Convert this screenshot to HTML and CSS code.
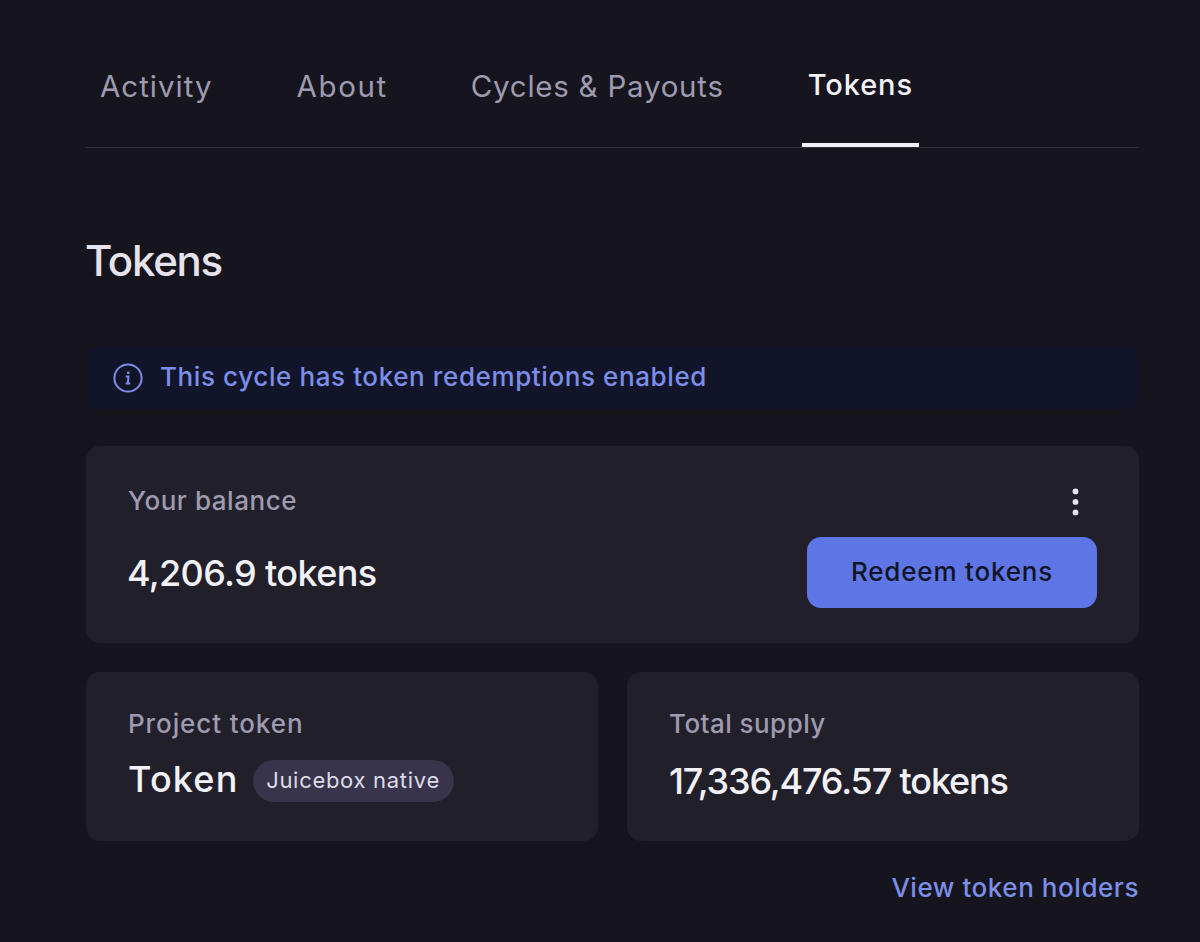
FILE: index.html
```html
<!DOCTYPE html>
<html lang="en">
<head>
  <meta charset="UTF-8" />
  <meta name="viewport" content="width=device-width, initial-scale=1.0"/>
  <title>Tokens</title>
  <link rel="stylesheet" href="styles.css">
</head>
<body>
  <nav class="tabs">
    <a class="tab tab-activity">Activity</a>
    <a class="tab tab-about">About</a>
    <a class="tab tab-cycles">Cycles &amp; Payouts</a>
    <a class="tab active">Tokens</a>
  </nav>
  <main>
    <h1>Tokens</h1>

    <div class="alert">
      <svg class="info-icon" width="30" height="30" viewBox="0 0 30 30" fill="none" stroke="currentColor" stroke-width="2">
        <circle cx="15" cy="15" r="13.6"/>
        <path d="M12.8 13.6H15.4L14.9 20.2M12.6 20.4H17.2"/>
        <circle cx="15.3" cy="9.8" r="1.4" fill="currentColor" stroke="none"/>
      </svg>
      <span class="alert-text">This cycle has token redemptions enabled</span>
    </div>

    <section class="card balance">
      <div>
        <div class="label">Your balance</div>
        <div class="value value-balance">4,206.9 tokens</div>
      </div>
      <div class="actions">
        <button class="menu-btn" aria-label="More">
          <svg width="8" height="28" viewBox="0 0 8 28" fill="currentColor">
            <circle cx="3.5" cy="3.4" r="2.9"/>
            <circle cx="3.5" cy="13.9" r="2.9"/>
            <circle cx="3.5" cy="24.4" r="2.9"/>
          </svg>
        </button>
        <button class="redeem-btn">Redeem tokens</button>
      </div>
    </section>

    <div class="row">
      <section class="card">
        <div class="label label-project">Project token</div>
        <div class="token">
          <span class="value value-token">Token</span>
          <span class="badge">Juicebox native</span>
        </div>
      </section>
      <section class="card">
        <div class="label label-supply">Total supply</div>
        <div class="value value-supply">17,336,476.57 tokens</div>
      </section>
    </div>

    <div class="footer">
      <a class="link">View token holders</a>
    </div>
  </main>
</body>
</html>
```
FILE: styles.css
```css
:root {
  --bg: #16141d;
  --card: #211f29;
  --line: #312e3a;
  --text: #f3f1f8;
  --muted: #9e9bb0;
  --primary: #5e76e5;
  --link: #7b8ee8;
}
* {
  box-sizing: border-box;
}
body {
  margin: 0;
  height: 942px;
  padding: 0 61px 0 86px;
  font-family: Inter, sans-serif;
  background: var(--bg);
  color: var(--text);
  overflow: hidden;
}
.tabs {
  display: flex;
  gap: 70px;
  height: 148px;
  padding: 52px 0 0 7px;
  border-bottom: 1px solid var(--line);
}
.tab {
  height: 95px;
  padding: 16px 7px 0;
  font-size: 29.5px;
  line-height: 36px;
  color: var(--muted);
  white-space: nowrap;
}
.tab-activity {
  letter-spacing: 1px;
}
.tab-about {
  letter-spacing: 1.6px;
  margin-right: -1px;
}
.tab-cycles {
  letter-spacing: 0.75px;
}
.tab.active {
  width: 117px;
  margin-left: 1px;
  padding: 15px 0 0 6px;
  font-size: 29px;
  font-weight: 500;
  letter-spacing: 0.9px;
  color: var(--text);
  border-bottom: 4px solid var(--text);
}
h1 {
  margin: 86px 0 58px -1px;
  font-size: 42px;
  line-height: 54px;
  font-weight: 500;
  letter-spacing: -1.3px;
  color: #e6e3ed;
}
.alert {
  display: flex;
  align-items: center;
  gap: 17px;
  height: 63px;
  padding: 0 27px;
  border-radius: 14px;
  background: #12152a;
  color: var(--link);
  font-size: 26px;
  font-weight: 500;
  letter-spacing: 0.6px;
  white-space: nowrap;
}
.alert-text {
  padding-bottom: 2px;
}
.card {
  padding: 39px 42px 0;
  border-radius: 14px;
  background: var(--card);
}
.label {
  font-size: 26px;
  line-height: 32px;
  font-weight: 500;
  letter-spacing: 0.55px;
  color: var(--muted);
}
.label-project {
  letter-spacing: 0.9px;
}
.label-supply {
  letter-spacing: 0.45px;
}
.value {
  font-size: 36px;
  line-height: 44px;
  font-weight: 500;
  white-space: nowrap;
}
.balance {
  display: flex;
  justify-content: space-between;
  height: 197px;
  margin-top: 37px;
}
.value-balance {
  margin: 34px 0 0 -1px;
  letter-spacing: -0.63px;
}
.actions {
  display: flex;
  flex-direction: column;
  align-items: flex-end;
}
button {
  padding: 0;
  border: none;
  font-family: inherit;
  cursor: pointer;
}
.menu-btn {
  height: 28px;
  margin: 3px 17px 21px 0;
  background: none;
  color: #e6e3ed;
}
.menu-btn svg {
  display: block;
}
.redeem-btn {
  width: 290px;
  height: 71px;
  padding-bottom: 2px;
  border-radius: 14px;
  background: var(--primary);
  color: #111426;
  font-size: 26px;
  font-weight: 500;
  letter-spacing: 0.8px;
}
.row {
  display: grid;
  grid-template-columns: 1fr 1fr;
  gap: 29px;
  margin-top: 29px;
}
.row .card {
  height: 169px;
  padding-top: 36px;
}
.token {
  display: flex;
  align-items: center;
  gap: 14px;
  margin-top: 19px;
}
.value-token {
  padding-bottom: 4px;
  line-height: 40px;
  letter-spacing: 1.2px;
}
.badge {
  width: 201px;
  height: 42px;
  border-radius: 21px;
  background: #38344b;
  color: #dedbea;
  font-size: 22px;
  line-height: 40px;
  letter-spacing: 0.7px;
  text-align: center;
  white-space: nowrap;
}
.value-supply {
  margin-top: 19px;
  letter-spacing: -1.15px;
}
.footer {
  display: flex;
  justify-content: flex-end;
  margin-top: 30px;
}
.link {
  font-size: 26px;
  line-height: 34px;
  font-weight: 500;
  letter-spacing: 0.55px;
  color: var(--link);
}
```
